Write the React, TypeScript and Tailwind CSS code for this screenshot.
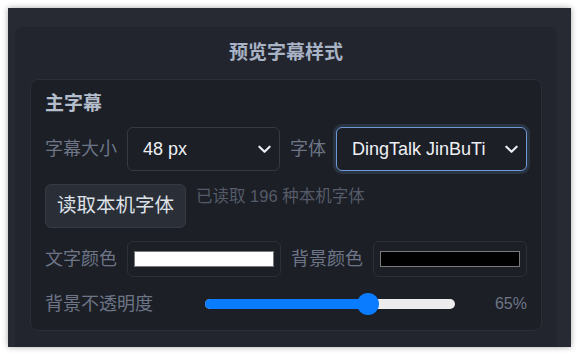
import { useState } from "react";

const font = "font-['Liberation_Sans','Noto_Sans_CJK_SC',sans-serif]";

const Chevron = () => (
  <svg
    className="pointer-events-none absolute right-[8px] top-1/2 -translate-y-1/2"
    width="15"
    height="15"
    viewBox="0 0 16 16"
    fill="none"
    stroke="#e9ecf1"
    strokeWidth="2.3"
    strokeLinecap="round"
    strokeLinejoin="round"
  >
    <path d="M2.5 5.5 8 11l5.5-5.5" />
  </svg>
);

interface SelectProps {
  value: string;
  options: string[];
  className?: string;
  focused?: boolean;
  onChange: (v: string) => void;
}

const Select = ({ value, options, className, focused, onChange }: SelectProps) => (
  <div className={`relative ${className ?? ""}`}>
    <select
      value={value}
      onChange={(e) => onChange(e.target.value)}
      className={`h-[44px] w-full appearance-none rounded-md border bg-[#1c1f26] pl-[15px] pr-8 text-[18px] text-[#eef0f4] outline-none ${font} ${
        focused ? "border-[#6d9ad6] shadow-[0_0_0_3px_#2a3342]" : "border-[#353a45]"
      }`}
    >
      {options.map((o) => (
        <option key={o} value={o}>
          {o}
        </option>
      ))}
    </select>
    <Chevron />
  </div>
);

const ColorBox = ({ color }: { color: string }) => (
  <div className="flex h-[36px] flex-1 items-center rounded-md border border-[#2c3039] bg-[#1c1f26] px-[6px]">
    <div className="h-[16px] w-full border border-[#7a7a7a]" style={{ background: color }} />
  </div>
);

export default function App() {
  const [size, setSize] = useState("48 px");
  const [family, setFamily] = useState("DingTalk JinBuTi");
  const opacity = 65;

  return (
    <div className={`h-[355px] bg-white p-2 ${font}`}>
      <div className="h-full overflow-hidden bg-[#272a33] pl-[7px] pr-[14px] pt-[19px] shadow-[0_0_6px_rgba(0,0,0,0.35)]">
        <div className="h-[400px] rounded-lg bg-[#22252d] px-[15px] pt-3">
          <h2 className="text-center text-[19px] font-bold leading-[27px] text-[#a9b3c6]">预览字幕样式</h2>

          <section className="mt-[13px] rounded-lg border border-[#2a2e37] bg-[#1c1f26] px-[14px] pb-[12px] pt-[10px]">
            <h3 className="text-[19px] font-bold leading-[27px] text-[#b4bdcc]">主字幕</h3>

            <div className="mt-[10px] flex flex-col gap-[13px] text-[18px] text-[#6d7586]">
              <div className="flex items-center gap-[10px]">
                <span className="w-[72px] shrink-0">字幕大小</span>
                <Select className="w-[153px]" value={size} options={["32 px", "40 px", "48 px", "56 px"]} onChange={setSize} />
                <span className="shrink-0">字体</span>
                <Select
                  className="flex-1"
                  focused
                  value={family}
                  options={["DingTalk JinBuTi", "Noto Sans CJK SC", "Liberation Sans"]}
                  onChange={setFamily}
                />
              </div>

              <div className="flex items-start gap-[10px]">
                <button
                  type="button"
                  className="h-[44px] rounded-md border border-[#353a45] bg-[#2a2e37] px-[11px] text-[19.5px] text-[#dde1e8]"
                >
                  读取本机字体
                </button>
                <span className="text-[16.5px] leading-[24px] text-[#555b68]">已读取 196 种本机字体</span>
              </div>

              <div className="flex items-center gap-[10px]">
                <span className="w-[72px] shrink-0">文字颜色</span>
                <ColorBox color="#ffffff" />
                <span className="w-[72px] shrink-0">背景颜色</span>
                <ColorBox color="#000000" />
              </div>

              <div className="flex h-[28px] items-center gap-[10px]">
                <span className="w-[150px] shrink-0">背景不透明度</span>
                <div className="relative h-[10px] flex-1 rounded-full bg-[#ececec]">
                  <div className="h-full rounded-full bg-[#0a7cff]" style={{ width: `${opacity}%` }} />
                  <div
                    className="absolute top-1/2 h-[22px] w-[22px] -translate-x-1/2 -translate-y-1/2 rounded-full bg-[#0a7cff]"
                    style={{ left: `${opacity}%` }}
                  />
                </div>
                <span className="w-[62px] shrink-0 text-right text-[16px]">{opacity}%</span>
              </div>
            </div>
          </section>
        </div>
      </div>
    </div>
  );
}
